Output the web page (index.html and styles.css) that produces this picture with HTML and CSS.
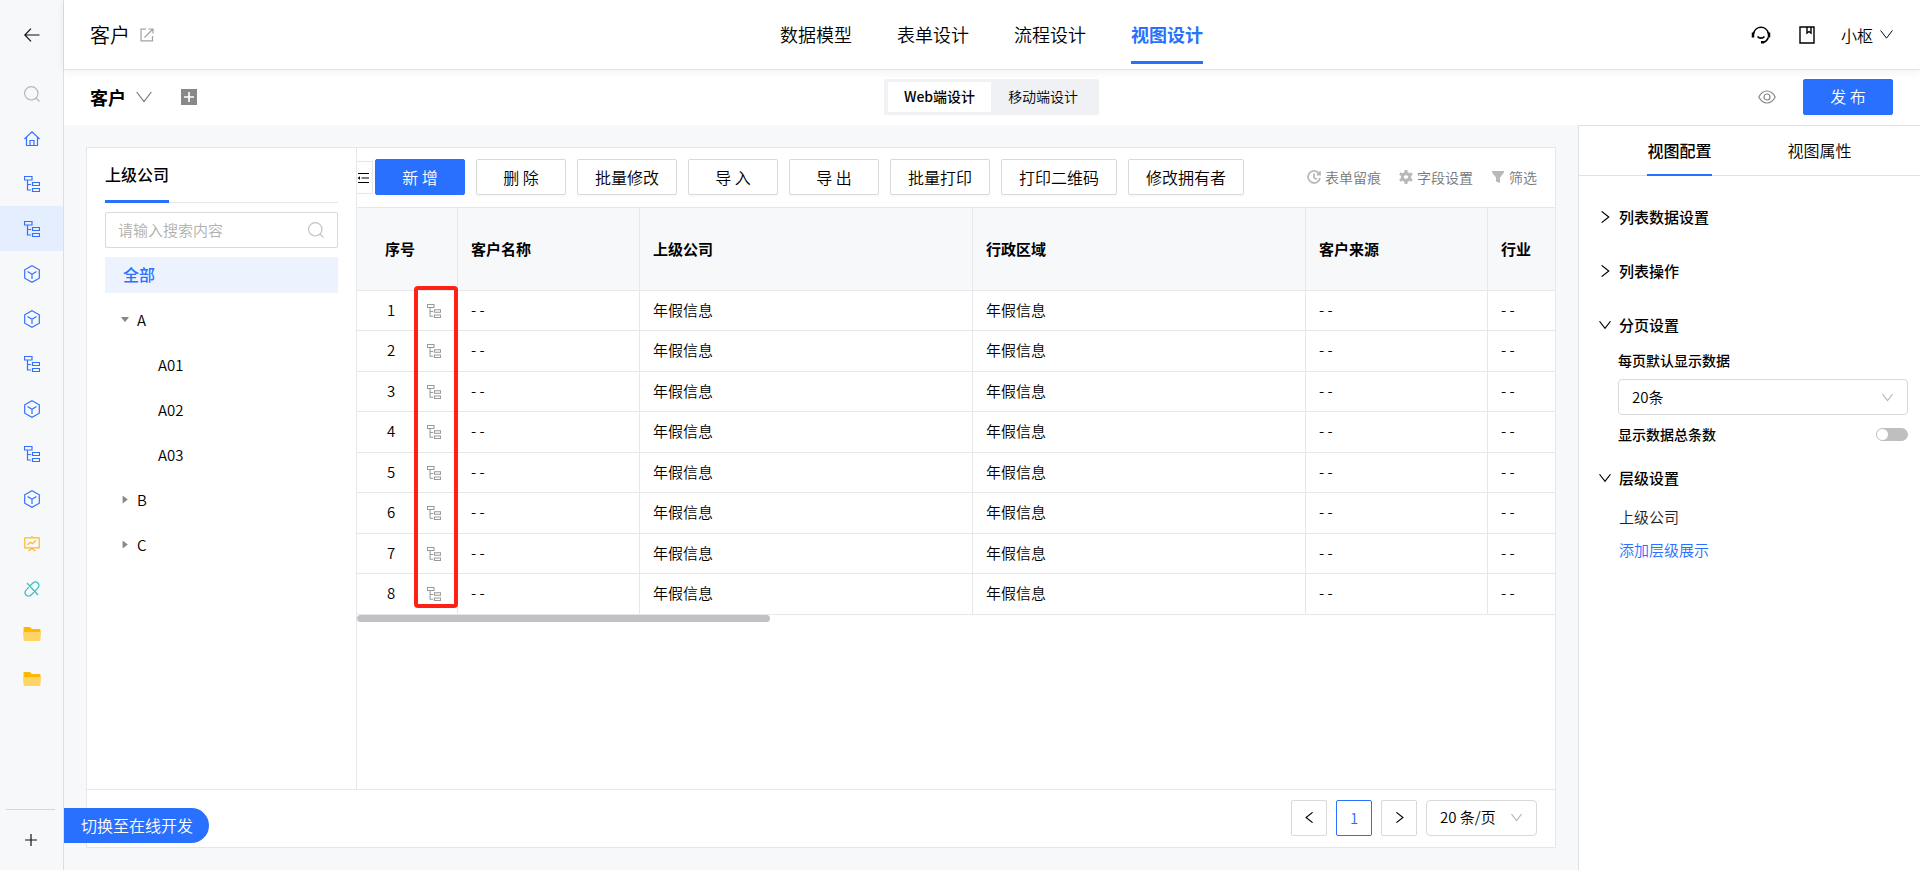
FILE: index.html
```html
<!DOCTYPE html>
<html lang="zh-CN">
<head>
<meta charset="UTF-8">
<title>视图设计</title>
<link rel="stylesheet" href="styles.css">
</head>
<body>

<svg class="sprite" aria-hidden="true">
	<symbol id="i-back" viewBox="0 0 16 16"><path d="M15.5 8H.8M7 1.7.8 8 7 14.3"/></symbol>
	<symbol id="i-search" viewBox="0 0 16 16"><circle cx="7.3" cy="7.3" r="6.7"/><path d="m12 12 3.6 3.6"/></symbol>
	<symbol id="i-home" viewBox="0 0 16 16"><path d="M.4 8 8 .8 15.6 8M2.5 6.3v8.2h11V6.3M6 14.5v-5h4v5"/></symbol>
	<symbol id="i-tree" viewBox="0 0 16 16"><path d="M.5.5H8V4H.5zM3.500 4v10H7M3.500 8.500H7M8.500 6.500h7v3h-7zM8.500 12.500h7v3h-7z"/></symbol>
	<symbol id="i-cube" viewBox="0 0 16 18"><path d="M8 .7l7.300 4.100v8.400L8 17.300.7 13.200V4.800zM3.500 6.500 8 9.200l4.500-2.700M8 9.200V14"/></symbol>
	<symbol id="i-board" viewBox="0 0 16 16"><path d="M.8 1.800h14.400v10H.8zM8 0v1.800M8 11.800V13M4.500 15 8 12.600l3.500 2.400M3.500 8.800l3-2.600 2 1.600 3.500-3.300"/></symbol>
	<symbol id="i-unlink" viewBox="0 0 16 16"><path d="M6 4.700 9 2a3.400 3.400 0 0 1 4.900 4.900l-2.700 2.900M10 11.300 7 14a3.400 3.400 0 0 1-4.900-4.900l2.700-2.900M3 2l11 12"/></symbol>
	<symbol id="i-plus" viewBox="0 0 12 12"><path d="M6 0v12M0 6h12"/></symbol>
	<symbol id="i-down" viewBox="0 0 16 16"><path d="M.7 3 8 12.500 15.300 3"/></symbol>
	<symbol id="i-right" viewBox="0 0 16 16"><path d="M3.500.500 13 8l-9.500 7.500"/></symbol>
	<symbol id="i-left" viewBox="0 0 16 16"><path d="M12.500.500 3 8l9.500 7.500"/></symbol>
	<symbol id="i-open" viewBox="0 0 14 14"><path d="M6 1.200H1v11.600h11.500V8M4.500 9.500l8-8M8.500 1H13v4.500"/></symbol>
	<symbol id="i-headset" viewBox="0 0 20 18"><path d="M2.700 7.500a7.400 7.400 0 0 1 14.600 0M17.300 11.500c-1 3-2.500 4.300-5 5M6.500 10.500c1.800 2.200 5.200 2.200 7 0"/><path d="M2 6.500v5M18 6.500v5M10 16.300h3" stroke-width="2.5"/></symbol>
	<symbol id="i-book" viewBox="0 0 16 18"><path d="M1 1h14v16H1zM8 1v6l2-1.500L12 7V1"/></symbol>
	<symbol id="i-eye" viewBox="0 0 18 14"><path d="M.8 7C3 2.800 5.700 1 9 1s6 1.800 8.200 6c-2.200 4.200-4.900 6-8.200 6S3 11.200.8 7z"/><circle cx="9" cy="7" r="3"/></symbol>
	<symbol id="i-fold" viewBox="0 0 12 12"><path d="M1 1.500h11M4.500 6H12M1 10.500h11"/><path d="M.5 6 3 4.200v3.600z" fill="currentColor" stroke="none"/></symbol>
	<symbol id="i-clock" viewBox="0 0 14 14"><path d="M11.800 3.200A6 6 0 1 0 13 8M13 1.200v3.300H9.800M7 3.500v4l2.800 1.800" stroke-width="1.8"/></symbol>
	<symbol id="i-gear" viewBox="0 0 14 14"><path d="M7 3l3.500 2v4L7 11 3.500 9V5z" stroke-width="3.2"/><path d="M7 0v2M7 12v2M.9 3.500l1.800 1M11.300 9.500l1.800 1M13.100 3.500l-1.800 1M2.700 9.500l-1.800 1" stroke-width="3"/></symbol>
	<symbol id="i-filter" viewBox="0 0 14 14"><path d="M1 1h12v1.500l-4 5V13l-4-1.500v-4l-4-5z" fill="currentColor" stroke="none"/></symbol>
	<symbol id="i-folder" viewBox="0 0 18 14"><path d="M.5 1.200C.5.500.8 0 1.500 0H7l2 2h7.500c.6 0 1 .4 1 1v6H.5z" fill="#ffb700" stroke="none"/><path d="M.5 5h17v7.500c0 1-.4 1.500-1.300 1.500H1.800c-.9 0-1.300-.5-1.300-1.500z" fill="#ffd466" stroke="none"/></symbol>
</svg>

<div class="app">
	<nav class="rail" aria-label="主导航">
		<button class="rail-back" aria-label="返回"><svg><use href="#i-back"/></svg></button>
		<button class="rail-item gray" aria-label="搜索"><svg><use href="#i-search"/></svg></button>
		<button class="rail-item" aria-label="首页"><svg><use href="#i-home"/></svg></button>
		<button class="rail-item" aria-label="层级"><svg><use href="#i-tree"/></svg></button>
		<button class="rail-item active" aria-label="客户"><svg><use href="#i-tree"/></svg></button>
		<button class="rail-item" aria-label="模型"><svg class="tall"><use href="#i-cube"/></svg></button>
		<button class="rail-item" aria-label="模型"><svg class="tall"><use href="#i-cube"/></svg></button>
		<button class="rail-item" aria-label="层级"><svg><use href="#i-tree"/></svg></button>
		<button class="rail-item" aria-label="模型"><svg class="tall"><use href="#i-cube"/></svg></button>
		<button class="rail-item" aria-label="层级"><svg><use href="#i-tree"/></svg></button>
		<button class="rail-item" aria-label="模型"><svg class="tall"><use href="#i-cube"/></svg></button>
		<button class="rail-item orange" aria-label="看板"><svg><use href="#i-board"/></svg></button>
		<button class="rail-item teal" aria-label="链接"><svg><use href="#i-unlink"/></svg></button>
		<button class="rail-item" aria-label="文件夹"><svg class="wide"><use href="#i-folder"/></svg></button>
		<button class="rail-item" aria-label="文件夹"><svg class="wide"><use href="#i-folder"/></svg></button>
		<button class="rail-add" aria-label="新建"><svg><use href="#i-plus"/></svg></button>
	</nav>

	<div class="page">
		<header class="topbar">
			<div class="title">客户 <svg><use href="#i-open"/></svg></div>
			<nav class="steps">
				<a href="#">数据模型</a>
				<a href="#">表单设计</a>
				<a href="#">流程设计</a>
				<a href="#" class="on">视图设计</a>
			</nav>
			<div class="user">
				<button aria-label="客服"><svg class="headset"><use href="#i-headset"/></svg></button>
				<button aria-label="文档"><svg class="book"><use href="#i-book"/></svg></button>
				<button class="name">小枢 <svg><use href="#i-down"/></svg></button>
			</div>
		</header>

		<div class="subbar">
			<div class="view-name">
				<button class="view-pick">客户 <svg><use href="#i-down"/></svg></button>
				<button class="view-add" aria-label="新建视图"><svg><use href="#i-plus"/></svg></button>
			</div>
			<div class="segment">
				<button class="on">Web端设计</button>
				<button>移动端设计</button>
			</div>
			<div class="publish">
				<button class="preview" aria-label="预览"><svg><use href="#i-eye"/></svg></button>
				<button class="btn primary">发 布</button>
			</div>
		</div>

		<div class="body">
			<main class="canvas">
				<div class="card">
					<div class="card-main">
						<aside class="levels">
							<div class="level-tabs"><button>上级公司</button></div>
							<label class="search">
								<input type="text" placeholder="请输入搜索内容" aria-label="搜索内容">
								<svg><use href="#i-search"/></svg>
							</label>
							<button class="all">全部</button>
							<ul class="tree">
								<li><button class="open">A</button>
									<ul>
										<li><button>A01</button></li>
										<li><button>A02</button></li>
										<li><button>A03</button></li>
									</ul>
								</li>
								<li><button class="closed">B</button></li>
								<li><button class="closed">C</button></li>
							</ul>
						</aside>

						<section class="list">
							<div class="toolbar">
								<button class="fold" aria-label="收起"><svg><use href="#i-fold"/></svg></button>
								<div class="actions">
									<button class="btn primary">新 增</button>
									<button class="btn">删 除</button>
									<button class="btn">批量修改</button>
									<button class="btn">导 入</button>
									<button class="btn">导 出</button>
									<button class="btn">批量打印</button>
									<button class="btn">打印二维码</button>
									<button class="btn">修改拥有者</button>
								</div>
								<div class="tools">
									<button><svg><use href="#i-clock"/></svg>表单留痕</button>
									<button><svg><use href="#i-gear"/></svg>字段设置</button>
									<button><svg><use href="#i-filter"/></svg>筛选</button>
								</div>
							</div>
							<div class="table-wrap">
								<table>
									<colgroup>
										<col class="c-no"><col class="c-text"><col class="c-wide"><col class="c-wide"><col class="c-text"><col class="c-text">
									</colgroup>
									<thead>
										<tr><th class="no">序号</th><th>客户名称</th><th>上级公司</th><th>行政区域</th><th>客户来源</th><th>行业</th></tr>
									</thead>
									<tbody>
										<tr><td class="no"><span>1</span><svg><use href="#i-tree"/></svg></td><td>- -</td><td>年假信息</td><td>年假信息</td><td>- -</td><td>- -</td></tr>
										<tr><td class="no"><span>2</span><svg><use href="#i-tree"/></svg></td><td>- -</td><td>年假信息</td><td>年假信息</td><td>- -</td><td>- -</td></tr>
										<tr><td class="no"><span>3</span><svg><use href="#i-tree"/></svg></td><td>- -</td><td>年假信息</td><td>年假信息</td><td>- -</td><td>- -</td></tr>
										<tr><td class="no"><span>4</span><svg><use href="#i-tree"/></svg></td><td>- -</td><td>年假信息</td><td>年假信息</td><td>- -</td><td>- -</td></tr>
										<tr><td class="no"><span>5</span><svg><use href="#i-tree"/></svg></td><td>- -</td><td>年假信息</td><td>年假信息</td><td>- -</td><td>- -</td></tr>
										<tr><td class="no"><span>6</span><svg><use href="#i-tree"/></svg></td><td>- -</td><td>年假信息</td><td>年假信息</td><td>- -</td><td>- -</td></tr>
										<tr><td class="no"><span>7</span><svg><use href="#i-tree"/></svg></td><td>- -</td><td>年假信息</td><td>年假信息</td><td>- -</td><td>- -</td></tr>
										<tr><td class="no"><span>8</span><svg><use href="#i-tree"/></svg></td><td>- -</td><td>年假信息</td><td>年假信息</td><td>- -</td><td>- -</td></tr>
									</tbody>
								</table>
								<div class="mark"></div>
								<div class="scroll-thumb"></div>
							</div>
						</section>
					</div>

					<footer class="pager">
						<button aria-label="上一页"><svg><use href="#i-left"/></svg></button>
						<button class="on">1</button>
						<button aria-label="下一页"><svg><use href="#i-right"/></svg></button>
						<div class="select size">
							<select aria-label="每页条数"><option>20 条/页</option></select>
							<svg><use href="#i-down"/></svg>
						</div>
					</footer>
				</div>
			</main>

			<aside class="config">
				<div class="config-tabs">
					<button class="on">视图配置</button>
					<button>视图属性</button>
				</div>
				<div class="groups">
					<button class="group"><svg><use href="#i-right"/></svg>列表数据设置</button>
					<button class="group"><svg><use href="#i-right"/></svg>列表操作</button>
					<button class="group"><svg><use href="#i-down"/></svg>分页设置</button>
					<div class="fields">
						<label for="page-size">每页默认显示数据</label>
						<div class="select">
							<select id="page-size"><option>20条</option></select>
							<svg><use href="#i-down"/></svg>
						</div>
						<div class="switch-row">
							<label for="show-total">显示数据总条数</label>
							<input type="checkbox" id="show-total" class="switch">
						</div>
					</div>
					<button class="group"><svg><use href="#i-down"/></svg>层级设置</button>
					<div class="level-list">
						<div>上级公司</div>
						<a href="#">添加层级展示</a>
					</div>
				</div>
			</aside>
		</div>
	</div>
	<button class="dev-switch">切换至在线开发</button>
</div>

</body>
</html>
```
FILE: styles.css
```css
* {
	box-sizing: border-box;
}
html, body {
	margin: 0;
	height: 100%;
	background: #f7f8fa;
	color: #000;
	font-family: "Noto Sans CJK SC", sans-serif;
	font-size: 15px;
	font-weight: 350;
	line-height: 24px;
}
button, input, select {
	margin: 0;
	padding: 0;
	border: 0;
	background: none;
	color: inherit;
	font: inherit;
}
a {
	color: inherit;
	text-decoration: none;
}
ul {
	margin: 0;
	padding: 0;
	list-style: none;
}
svg {
	display: block;
	flex: none;
	width: 16px;
	height: 16px;
	fill: none;
	stroke: currentColor;
	stroke-width: 1.2;
}
.sprite {
	position: absolute;
	width: 0;
	height: 0;
}

.app {
	display: flex;
	position: relative;
	min-height: 100vh;
}

/* icon rail */
.rail {
	display: flex;
	flex-direction: column;
	flex: none;
	width: 64px;
	border-right: 1px solid #dcdee0;
	color: #3370ff;
}
.rail button {
	display: flex;
	align-items: center;
	justify-content: center;
}
.rail-back {
	height: 71px;
	padding-bottom: 2px;
	color: #111;
}
.rail-item {
	height: 45px;
}
.rail-item.active {
	background: #e5eefe;
}
.rail-item.gray {
	color: #b5b7ba;
}
.rail-item.orange {
	color: #ffb72b;
}
.rail-item.teal {
	color: #35c0bd;
}
.rail svg.tall {
	height: 18px;
}
.rail svg.wide {
	width: 18px;
	height: 14px;
}
.rail .rail-add {
	height: 61px;
	margin: auto 8px 0 6px;
	border-top: 1px solid #d5d7da;
	color: #111;
}
.rail-add svg {
	width: 12px;
	height: 12px;
}

/* top bars */
.page {
	display: flex;
	flex-direction: column;
	flex: 1;
	min-width: 0;
}
.topbar, .subbar {
	display: grid;
	grid-template-columns: 1fr auto 1fr;
	align-items: center;
	padding: 0 27px 0 26px;
	background: #fff;
}
.topbar {
	position: relative;
	height: 70px;
	border-bottom: 1px solid #e4e5e7;
	box-shadow: 0 2px 8px rgba(0, 0, 0, .06);
}
.title {
	display: flex;
	align-items: center;
	gap: 10px;
	font-size: 20px;
}
.title svg {
	width: 14px;
	height: 14px;
	color: #a0a2a5;
}
.steps {
	display: flex;
	gap: 45px;
	font-size: 18px;
}
.steps a {
	padding: 16px 0 15px;
	border-bottom: 3px solid transparent;
}
.steps .on {
	border-color: #2970ff;
	color: #2970ff;
	font-weight: bold;
}
.user {
	display: flex;
	align-items: center;
	justify-content: flex-end;
	gap: 26px;
	font-size: 16px;
}
.user .name {
	display: flex;
	align-items: center;
	gap: 7px;
}
.user .name svg {
	width: 13px;
	height: 13px;
}
svg.headset {
	width: 20px;
	height: 18px;
	margin-right: 2px;
	stroke-width: 1.6;
}
svg.book {
	height: 18px;
	stroke-width: 1.4;
}
.subbar {
	height: 55px;
	padding-bottom: 2px;
}
.view-name, .view-pick, .publish {
	display: flex;
	align-items: center;
}
.view-name {
	gap: 29px;
}
.view-pick {
	gap: 10px;
	font-size: 18px;
	font-weight: bold;
}
.view-pick svg {
	color: #777;
}
.view-add {
	padding: 3px;
	background: #888;
	color: #fff;
}
.view-add svg {
	width: 10px;
	height: 10px;
	stroke-width: 2;
}
.segment {
	display: flex;
	padding: 3px 4px;
	border-radius: 2px;
	background: #f0f1f5;
	font-size: 14px;
}
.segment button {
	height: 30px;
	padding: 0 17px 1px;
}
.segment .on {
	padding: 0 16px 1px;
	background: #fff;
	font-weight: 500;
}
.publish {
	justify-content: flex-end;
	gap: 27px;
}
.preview svg {
	width: 18px;
	height: 14px;
	color: #888;
}

.btn {
	min-width: 90px;
	height: 36px;
	padding: 0 17px 1px;
	border: 1px solid #d9d9d9;
	border-radius: 2px;
	background: #fff;
	font-size: 16px;
	white-space: nowrap;
	box-shadow: 0 2px 0 rgba(0, 0, 0, .02);
}
.btn.primary {
	border-color: #2970ff;
	background: #2970ff;
	color: #fff;
}

/* canvas */
.body {
	display: flex;
	flex: 1;
}
.canvas {
	display: flex;
	flex: 1;
	min-width: 0;
	padding: 22px;
}
.card {
	display: flex;
	flex-direction: column;
	flex: 1;
	min-width: 0;
	border: 1px solid #e6e7eb;
	background: #fff;
}
.card-main {
	display: flex;
	flex: 1;
}

.levels {
	flex: none;
	width: 270px;
	padding: 9px 18px 0;
	border-right: 1px solid #e6e7eb;
}
.level-tabs {
	display: flex;
	height: 46px;
	border-bottom: 1px solid #e6e7eb;
}
.level-tabs button {
	height: 46px;
	padding-bottom: 9px;
	border-bottom: 3px solid #2970ff;
	font-size: 16px;
	font-weight: 500;
}
.search {
	display: flex;
	align-items: center;
	height: 36px;
	margin: 9px 0;
	padding: 0 13px 0 12px;
	border: 1px solid #d9d9d9;
	border-radius: 2px;
	color: #c0c2c5;
}
.search input {
	flex: 1;
	min-width: 0;
	outline: none;
}
.search input::placeholder {
	color: #b0b0b0;
}
.all {
	width: 100%;
	height: 36px;
	padding: 0 0 2px 18px;
	background: #ecf3fe;
	color: #2970ff;
	font-size: 16px;
	font-weight: 500;
	text-align: left;
}
.tree {
	padding-top: 4px;
}
.tree button {
	display: flex;
	align-items: center;
	gap: 8px;
	width: 100%;
	height: 45px;
	padding-left: 16px;
	text-align: left;
}
.tree ul button {
	padding-left: 53px;
}
.tree .open::before,
.tree .closed::before {
	content: "";
	width: 8px;
	height: 8px;
	background: #888;
	clip-path: polygon(0 20%, 100% 20%, 50% 85%);
}
.tree .closed::before {
	clip-path: polygon(20% 0, 85% 50%, 20% 100%);
}

.list {
	display: flex;
	flex-direction: column;
	flex: 1;
	min-width: 0;
}
.toolbar {
	display: flex;
	align-items: center;
	height: 59px;
	padding-right: 18px;
}
.fold {
	width: 16px;
	height: 33px;
	margin-right: 2px;
	border: 1px solid #e6e7eb;
	border-left: 0;
}
.fold svg {
	width: 12px;
	height: 12px;
}
.actions {
	display: flex;
	gap: 11px;
	padding-bottom: 1px;
}
.tools {
	display: flex;
	gap: 18px;
	margin-left: auto;
	padding-bottom: 2px;
	color: #777;
	font-size: 14px;
}
.tools button {
	display: flex;
	align-items: center;
	gap: 4px;
	white-space: nowrap;
}
.tools svg {
	width: 14px;
	height: 14px;
	color: #b8b9bb;
}

.table-wrap {
	position: relative;
	overflow: hidden;
	border-top: 1px solid #e6e7eb;
}
table {
	width: 1313px;
	min-width: 100%;
	table-layout: fixed;
	border-spacing: 0;
}
.c-no {
	width: 101px;
}
.c-text {
	width: 182px;
}
.c-wide {
	width: 333px;
}
th, td {
	height: 40px;
	padding: 0 13px;
	border-right: 1px solid #e6e7eb;
	border-bottom: 1px solid #e6e7eb;
	text-align: left;
}
td {
	padding-bottom: 2px;
}
tr:nth-child(even) td {
	height: 41px;
}
th {
	height: 83px;
	background: #f7f8fa;
	font-weight: bold;
}
th.no {
	padding-left: 28px;
}
td.no {
	padding: 0 15px 0 30px;
}
td.no span {
	display: inline-block;
	width: 40px;
	padding-bottom: 2px;
	vertical-align: middle;
}
td.no svg {
	display: inline-block;
	width: 14px;
	height: 14px;
	color: #999;
	vertical-align: middle;
}
/* highlight around the hierarchy icons */
.mark {
	position: absolute;
	top: 78px;
	left: 57px;
	width: 44px;
	height: 322px;
	border: 4px solid #ff2114;
	border-radius: 4px;
}
.scroll-thumb {
	width: 413px;
	height: 7px;
	border-radius: 4px;
	background: #c1c2c4;
}

.pager {
	display: flex;
	align-items: center;
	justify-content: flex-end;
	gap: 9px;
	height: 58px;
	padding: 0 18px 2px;
	border-top: 1px solid #e6e7eb;
}
.pager button {
	display: flex;
	align-items: center;
	justify-content: center;
	width: 36px;
	height: 36px;
	border: 1px solid #d9d9d9;
	border-radius: 2px;
}
.pager button svg {
	width: 11px;
	height: 11px;
	stroke-width: 1.6;
}
.pager .on {
	border-color: #2970ff;
	color: #2970ff;
}

.select {
	display: grid;
	align-items: center;
}
.select select,
.select svg {
	grid-area: 1 / 1;
}
.select select {
	width: 100%;
	height: 36px;
	padding: 0 13px 1px;
	border: 1px solid #d9d9d9;
	border-radius: 4px;
	background: #fff;
	appearance: none;
}
.select svg {
	justify-self: end;
	width: 11px;
	height: 11px;
	margin-right: 15px;
	color: #b5b7ba;
	stroke-width: 1.6;
	pointer-events: none;
}
.select.size {
	width: 111px;
}

/* right side settings */
.config {
	flex: none;
	width: 342px;
	border: solid #e0e1e3;
	border-width: 1px 0 0 1px;
	background: #fff;
}
.config-tabs {
	display: flex;
	justify-content: center;
	gap: 76px;
	height: 50px;
	border-bottom: 1px solid #e0e1e3;
	font-size: 16px;
}
.config-tabs button {
	height: 50px;
	border-bottom: 2px solid transparent;
}
.config-tabs .on {
	border-color: #2970ff;
	font-weight: 500;
}
.groups {
	padding: 14px 12px 0 20px;
}
.group {
	display: flex;
	align-items: center;
	gap: 8px;
	width: 100%;
	height: 54px;
	padding-bottom: 1px;
	font-weight: 500;
}
.group svg {
	width: 12px;
	height: 12px;
	stroke-width: 1.6;
}
.fields {
	display: grid;
	gap: 7px;
	padding: 0 0 5px 19px;
	margin-top: -4px;
}
.fields label {
	font-size: 14px;
	font-weight: 500;
}
.switch-row {
	display: flex;
	align-items: center;
	justify-content: space-between;
}
.switch {
	width: 32px;
	height: 13px;
	padding: 1px;
	border-radius: 7px;
	background: #bfbfbf;
	appearance: none;
}
.switch::before {
	content: "";
	display: block;
	width: 11px;
	height: 11px;
	border-radius: 50%;
	background: #fff;
}
.switch:checked {
	background: #2970ff;
}
.switch:checked::before {
	margin-left: auto;
}
.level-list {
	display: grid;
	gap: 9px;
	padding-left: 20px;
}
.level-list div {
	color: #222;
}
.level-list a {
	color: #2970ff;
}

/* floats over the bottom left corner of the canvas */
.dev-switch {
	position: absolute;
	left: 64px;
	bottom: 27px;
	height: 35px;
	padding: 0 16px 1px 17px;
	border-radius: 0 18px 18px 0;
	background: #2970ff;
	color: #fff;
	font-size: 16px;
}
```
